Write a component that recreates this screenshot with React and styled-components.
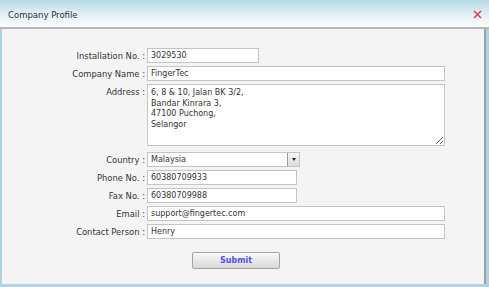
import React from "react";
import styled, { createGlobalStyle } from "styled-components";

const Global = createGlobalStyle`
  html, body { margin: 0; padding: 0; }
  body { width: 489px; height: 287px; overflow: hidden; background: #aed5df; }
`;

const Frame = styled.div`
  width: 489px;
  height: 287px;
  box-sizing: border-box;
  padding: 0 2px 3px 2px;
  background: #aed5df;
  display: flex;
  flex-direction: column;
  font-family: "DejaVu Sans", Verdana, sans-serif;
`;

const TitleBar = styled.div`
  margin: 0 -2px;
  height: 29px;
  box-sizing: border-box;
  display: flex;
  align-items: center;
  justify-content: space-between;
  padding: 2px 8px 0 8px;
  background: linear-gradient(#b3d9e4 0%, #dceef3 45%, #fbfdfe 100%);
  border-bottom: 2px solid #b7b7b7;
`;

const Title = styled.span`
  font-size: 8.5px;
  color: #333;
`;

const Close = styled.svg`
  width: 9px;
  height: 9px;
  margin-right: -1px;
`;

const Panel = styled.div`
  flex: 1;
  background: #f4f4f4;
  border-right: 2px solid #9aa3a8;
  margin-right: 1px;
  padding: 19px 0 0 0;
  box-sizing: border-box;
`;

const Form = styled.div`
  display: grid;
  grid-template-columns: 143px 298px;
  column-gap: 2px;
  row-gap: 3px;
  align-items: center;
`;

const Label = styled.label`
  text-align: right;
  font-size: 8.4px;
  color: #333;
  white-space: nowrap;
  align-self: ${(p) => (p.$top ? "start" : "center")};
  padding-top: ${(p) => (p.$top ? "3px" : "0")};
`;

const Input = styled.input`
  box-sizing: border-box;
  width: ${(p) => p.$w || 298}px;
  height: 15px;
  border: 1px solid #c4c4c4;
  background: #fff;
  padding: 0 3px;
  font-family: inherit;
  font-size: 8px;
  color: #333;
  outline: none;
`;

const Area = styled.textarea`
  box-sizing: border-box;
  width: 298px;
  height: 62px;
  margin-bottom: 3px;
  border: 1px solid #c4c4c4;
  background: #fff;
  padding: 3px 3px;
  font-family: inherit;
  font-size: 8px;
  line-height: 10.5px;
  color: #333;
  resize: both;
  outline: none;
`;

const Select = styled.div`
  box-sizing: border-box;
  width: 153px;
  height: 15px;
  border: 1px solid #c4c4c4;
  background: #fff;
  display: flex;
  align-items: center;
  justify-content: space-between;
  padding-left: 3px;
  font-size: 8px;
  color: #333;
`;

const Arrow = styled.span`
  box-sizing: border-box;
  width: 12px;
  height: 13px;
  border-left: 1px solid #9a9a9a;
  background: linear-gradient(#f6f6f6, #dcdcdc);
  display: flex;
  align-items: center;
  justify-content: center;
  &::after {
    content: "";
    border-left: 2.5px solid transparent;
    border-right: 2.5px solid transparent;
    border-top: 3px solid #222;
  }
`;

const ButtonRow = styled.div`
  grid-column: 2;
  display: flex;
  padding: 10px 0 0 45px;
`;

const Submit = styled.button`
  width: 88px;
  height: 17px;
  border: 1px solid #a2a2a2;
  border-radius: 2px;
  background: linear-gradient(#fafafa, #e8e8e8 50%, #d9d9d9);
  font-family: inherit;
  font-size: 8px;
  font-weight: 600;
  color: #5a4fe0;
  padding: 0;
`;

const fields = [
  { label: "Installation No. :", value: "3029530", w: 112 },
  { label: "Company Name :", value: "FingerTec" },
];

const fields2 = [
  { label: "Phone No. :", value: "60380709933", w: 150 },
  { label: "Fax No. :", value: "60380709988", w: 150 },
  { label: "Email :", value: "support@fingertec.com" },
  { label: "Contact Person :", value: "Henry" },
];

export default function App() {
  return (
    <>
      <Global />
      <Frame>
        <TitleBar>
          <Title>Company Profile</Title>
          <Close viewBox="0 0 9 9">
            <path d="M1 1 L8 8 M8 1 L1 8" stroke="#d2474a" strokeWidth="1.6" />
          </Close>
        </TitleBar>
        <Panel>
          <Form>
            {fields.map((f) => (
              <React.Fragment key={f.label}>
                <Label>{f.label}</Label>
                <Input $w={f.w} defaultValue={f.value} />
              </React.Fragment>
            ))}
            <Label $top>Address :</Label>
            <Area
              defaultValue={"6, 8 & 10, Jalan BK 3/2,\nBandar Kinrara 3,\n47100 Puchong,\nSelangor"}
            />
            <Label>Country :</Label>
            <Select>
              Malaysia
              <Arrow />
            </Select>
            {fields2.map((f) => (
              <React.Fragment key={f.label}>
                <Label>{f.label}</Label>
                <Input $w={f.w} defaultValue={f.value} />
              </React.Fragment>
            ))}
            <ButtonRow>
              <Submit>Submit</Submit>
            </ButtonRow>
          </Form>
        </Panel>
      </Frame>
    </>
  );
}
